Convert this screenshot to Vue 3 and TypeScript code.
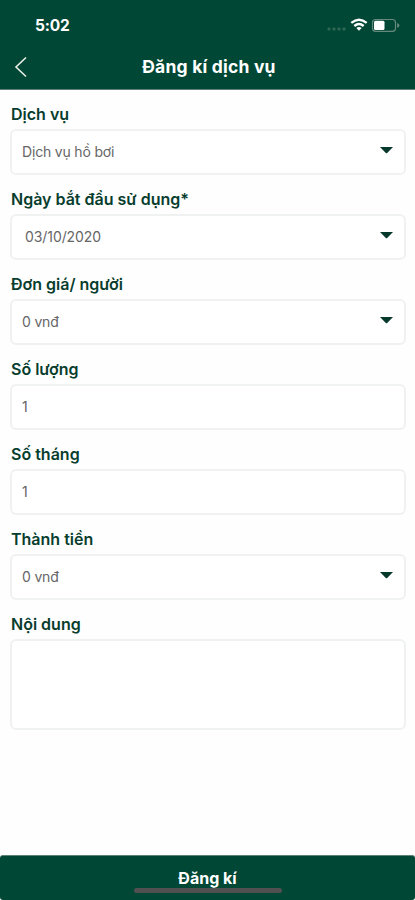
<script setup lang="ts">
interface Field {
  label: string
  value: string
  kind: 'select' | 'date' | 'input' | 'textarea'
}

const fields: Field[] = [
  { label: 'Dịch vụ', value: 'Dịch vụ hồ bơi', kind: 'select' },
  { label: 'Ngày bắt đầu sử dụng*', value: '03/10/2020', kind: 'date' },
  { label: 'Đơn giá/ người', value: '0 vnđ', kind: 'select' },
  { label: 'Số lượng', value: '1', kind: 'input' },
  { label: 'Số tháng', value: '1', kind: 'input' },
  { label: 'Thành tiền', value: '0 vnđ', kind: 'select' },
  { label: 'Nội dung', value: '', kind: 'textarea' },
]
</script>

<template>
  <div class="screen">
    <header class="header">
      <div class="status">
        <span class="time">5:02</span>
        <svg class="indicators" width="74" height="18" viewBox="0 0 74 18">
          <g fill="#2f6955">
            <rect x="1.5" y="11.5" width="3" height="3" rx="1" />
            <rect x="6.5" y="11.5" width="3" height="3" rx="1" />
            <rect x="11.5" y="11.5" width="3" height="3" rx="1" />
            <rect x="16.5" y="11.5" width="3" height="3" rx="1" />
          </g>
          <g fill="none" stroke="#fff" stroke-width="2.3">
            <path d="M25.3 6.9Q33 .5 40.7 6.9" />
            <path d="M28.3 10Q33 6 37.7 10" />
          </g>
          <path d="M30.3 11.9Q33 9.9 35.7 11.9L33 14.7Z" fill="#fff" />
          <rect x="46.5" y="3.5" width="23" height="11.8" rx="3" fill="none" stroke="#66897c" stroke-width="1.2" />
          <rect x="48" y="4.8" width="10.5" height="9.2" rx="1.5" fill="#fff" />
          <path d="M71.2 7v4.8q2.2-.8 2.2-2.4t-2.2-2.4z" fill="#66897c" />
        </svg>
      </div>
      <div class="nav">
        <button class="back" type="button" aria-label="Quay lại">
          <svg width="14" height="22" viewBox="0 0 14 22">
            <path d="M12 1.5L2 11l10 9.5" fill="none" stroke="#e9efe5" stroke-width="1.6" />
          </svg>
        </button>
        <h1 class="title">Đăng kí dịch vụ</h1>
      </div>
    </header>

    <main class="form">
      <section v-for="field in fields" :key="field.label" class="field">
        <div class="label">{{ field.label }}</div>
        <div class="control" :class="field.kind">
          <span class="value">{{ field.value }}</span>
          <svg v-if="field.kind === 'select' || field.kind === 'date'" class="caret" width="13" height="7" viewBox="0 0 13 7">
            <path d="M0 0h13L7.2 6q-.7.7-1.4 0z" fill="#06382b" />
          </svg>
        </div>
      </section>
    </main>

    <button class="submit" type="button">
      <span class="submit-text">Đăng kí</span>
      <span class="home-bar"></span>
    </button>
  </div>
</template>

<style>
body {
  background: #fff;
}
</style>

<style scoped>
.screen {
  display: flex;
  flex-direction: column;
  height: 900px;
  box-sizing: border-box;
  background: #fefefe;
  font-family: Inter, "Liberation Sans", sans-serif;
  overflow: hidden;
}
.header {
  height: 90px;
  box-sizing: border-box;
  flex: none;
  background: #004735;
  border-bottom: 1px solid #5b8074;
  color: #fff;
}
.status {
  display: flex;
  justify-content: space-between;
  padding: 16px 15px 0 35px;
  height: 20px;
}
.time {
  font-size: 15.5px;
  font-weight: 700;
  line-height: 20px;
  letter-spacing: -0.2px;
}
.indicators {
  display: block;
}
.nav {
  display: grid;
  grid-template-columns: 40px 1fr 40px;
  align-items: center;
  height: 40px;
  margin-top: 11px;
}
.back {
  display: flex;
  padding: 0 0 0 14px;
  border: 0;
  background: none;
}
.title {
  margin: 0 0 0 3px;
  text-align: center;
  font-size: 17.5px;
  font-weight: 700;
  line-height: 24px;
  letter-spacing: 0.2px;
  white-space: nowrap;
}
.form {
  flex: 1;
  padding: 0 9px 0 10px;
}
.label {
  height: 39px;
  box-sizing: border-box;
  padding: 14px 0 0 1px;
  font-size: 16px;
  font-weight: 600;
  line-height: 20px;
  color: #083d2e;
  white-space: nowrap;
}
.control {
  display: flex;
  align-items: center;
  justify-content: space-between;
  height: 46px;
  box-sizing: border-box;
  padding: 0 11px 0 10px;
  border: 2px solid #f0f1f1;
  border-radius: 6px;
  background: #fff;
}
.control.date {
  padding-left: 13px;
}
.control.textarea {
  height: 91px;
}
.value {
  font-size: 14px;
  line-height: 20px;
  letter-spacing: -0.18px;
  color: #666;
}
.control.date .value {
  letter-spacing: -0.08px;
}
.caret {
  margin-bottom: 3px;
}
.submit {
  display: flex;
  flex-direction: column;
  align-items: center;
  flex: none;
  height: 45px;
  padding: 12px 0 0;
  border: 0;
  border-top: 1px solid #5b8074;
  border-radius: 3px;
  background: #004735;
  color: #fff;
  font-family: inherit;
}
.submit-text {
  font-size: 16px;
  font-weight: 700;
  line-height: 20px;
}
.home-bar {
  width: 148px;
  height: 5px;
  border-radius: 3px;
  background: #505050;
}
</style>
